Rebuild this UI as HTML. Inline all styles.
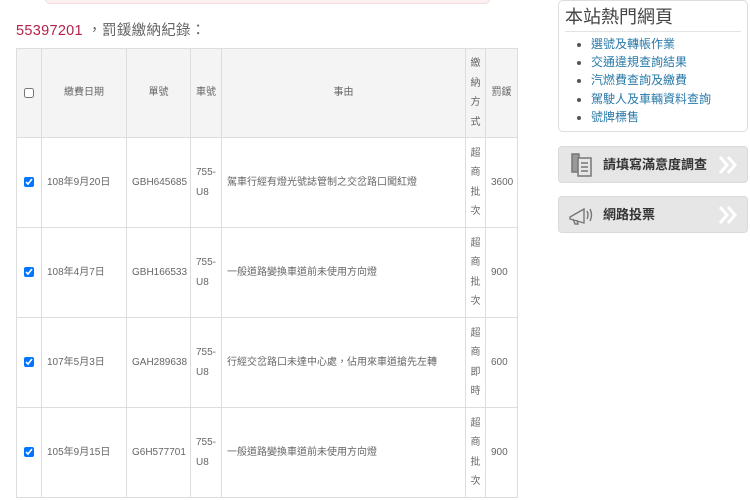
<!DOCTYPE html>
<html><head><meta charset="utf-8"><style>
*{margin:0;padding:0;box-sizing:border-box}
body{width:750px;height:500px;overflow:hidden;background:#fff;font-family:"Liberation Sans","Noto Sans CJK TC",sans-serif;position:relative}
.pink{position:absolute;left:45px;top:-6px;width:445px;height:10px;background:#fdf0f1;border:1px solid #f3dcdf;border-radius:5px}
.title{position:absolute;left:16px;top:19px;font-size:14.5px;color:#666;letter-spacing:.3px}
.title b{font-weight:normal;color:#b3224a}
table{position:absolute;left:16px;top:48px;width:501px;border-collapse:collapse;table-layout:fixed;font-size:10px;color:#666}
td,th{border:1px solid #ddd;font-weight:normal;line-height:19.5px}
th{background:#f4f4f4;text-align:center;height:89px}
tr.r td{height:90px}
td{padding:0 5px}
.c{text-align:center;padding:0}
input{width:10px;height:10px;vertical-align:middle}
.box{position:absolute;left:558px;top:0;width:190px;height:132px;border:1px solid #ddd;border-radius:5px}
.box h3{font-weight:normal;font-size:18px;color:#444;margin:4px 6px 0;padding-bottom:2px;border-bottom:1px solid #e3e3e3;line-height:24px}
.box ul{margin:3px 0 0 32px;font-size:12px;line-height:18.2px;color:#2a7aa8}
.box li::marker{color:#555}
.btn{position:absolute;left:558px;width:190px;height:37px;background:#e6e6e6;border:1px solid #dadada;border-radius:4px;font-size:13px;font-weight:bold;color:#333;line-height:35px}
.btn span{position:absolute;left:44px}
.chev{position:absolute;right:8px;top:8px}
</style></head><body>
<div class="pink"></div>
<div class="title"><b>55397201</b> ，罰鍰繳納紀錄：</div>
<table>
<colgroup><col style="width:25px"><col style="width:85px"><col style="width:64px"><col style="width:31px"><col style="width:244px"><col style="width:20px"><col style="width:32px"></colgroup>
<tr><th><input type="checkbox"></th><th>繳費日期</th><th>單號</th><th>車號</th><th>事由</th><th>繳<br>納<br>方<br>式</th><th>罰鍰</th></tr>
<tr class="r"><td class="c"><input type="checkbox" checked></td><td>108年9月20日</td><td>GBH645685</td><td>755-<br>U8</td><td>駕車行經有燈光號誌管制之交岔路口闖紅燈</td><td class="c">超<br>商<br>批<br>次</td><td>3600</td></tr>
<tr class="r"><td class="c"><input type="checkbox" checked></td><td>108年4月7日</td><td>GBH166533</td><td>755-<br>U8</td><td>一般道路變換車道前未使用方向燈</td><td class="c">超<br>商<br>批<br>次</td><td>900</td></tr>
<tr class="r"><td class="c"><input type="checkbox" checked></td><td>107年5月3日</td><td>GAH289638</td><td>755-<br>U8</td><td>行經交岔路口未達中心處，佔用來車道搶先左轉</td><td class="c">超<br>商<br>即<br>時</td><td>600</td></tr>
<tr class="r"><td class="c"><input type="checkbox" checked></td><td>105年9月15日</td><td>G6H577701</td><td>755-<br>U8</td><td>一般道路變換車道前未使用方向燈</td><td class="c">超<br>商<br>批<br>次</td><td>900</td></tr>
</table>
<div class="box"><h3>本站熱門網頁</h3><ul><li>選號及轉帳作業</li><li>交通違規查詢結果</li><li>汽燃費查詢及繳費</li><li>駕駛人及車輛資料查詢</li><li>號牌標售</li></ul></div>
<div class="btn" style="top:146px">
<svg style="position:absolute;left:10px;top:5px" width="26" height="26" viewBox="0 0 26 26" fill="none" stroke="#777" stroke-width="1.5"><rect x="3" y="2" width="7" height="18" fill="#999"/><rect x="9" y="6" width="13" height="18" fill="#e6e6e6"/><path d="M12 11h7M12 15h7M12 19h7"/></svg>
<span>請填寫滿意度調查</span>
<svg class="chev" width="22" height="20" viewBox="0 0 22 20" fill="none" stroke="#fff" stroke-width="3"><path d="M3 2l7 8-7 8M11 2l7 8-7 8"/></svg></div>
<div class="btn" style="top:196px">
<svg style="position:absolute;left:8px;top:6px" width="30" height="24" viewBox="0 0 30 24" fill="none" stroke="#777" stroke-width="1.4"><path d="M3 14l14-8v14L3 16zM6 16l2 5h3l-1-4M20 8q2 4 0 8M23 6q3 6 0 12"/></svg>
<span>網路投票</span>
<svg class="chev" width="22" height="20" viewBox="0 0 22 20" fill="none" stroke="#fff" stroke-width="3"><path d="M3 2l7 8-7 8M11 2l7 8-7 8"/></svg></div>
</body></html>
